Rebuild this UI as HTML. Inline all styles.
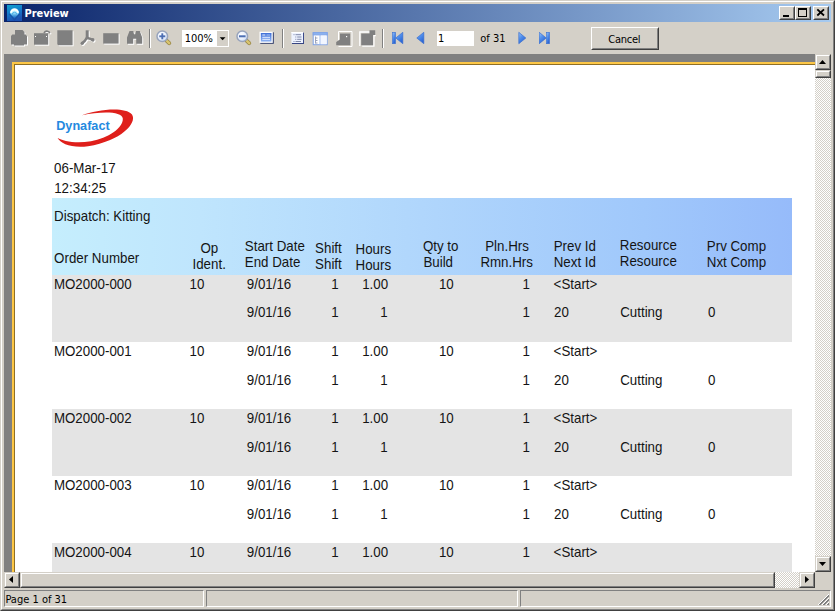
<!DOCTYPE html><html><head><meta charset="utf-8"><title>Preview</title><style>
html,body{margin:0;padding:0;}
body{width:835px;height:611px;overflow:hidden;background:#d4d0c8;position:relative;font-family:"Liberation Sans","DejaVu Sans",sans-serif;}
.abs{position:absolute;}
#frame{position:absolute;left:0;top:0;width:835px;height:611px;box-sizing:border-box;border:1px solid;border-color:#d4d0c8 #404040 #404040 #d4d0c8;}
#frame2{position:absolute;left:1px;top:1px;width:833px;height:609px;box-sizing:border-box;border:1px solid;border-color:#fff #808080 #808080 #fff;}
#title{position:absolute;left:4px;top:4px;width:827px;height:18px;background:linear-gradient(to right,#0a246a 0%,#a6caf0 100%);}
#title .txt{position:absolute;left:20.5px;top:3px;color:#fff;font-weight:bold;font-size:11px;line-height:14px;letter-spacing:-0.05px;}
.cb{position:absolute;top:2px;width:16px;height:14px;box-sizing:border-box;background:#d4d0c8;border:1px solid;border-color:#fff #404040 #404040 #fff;}
.cb i{position:absolute;left:0;top:0;right:0;bottom:0;border:1px solid;border-color:#d4d0c8 #808080 #808080 #d4d0c8;}
#grey{position:absolute;left:4px;top:54px;width:811px;height:518px;background:#808080;}
#pageb{position:absolute;left:12px;top:62px;width:803px;height:510px;background:#fdc746;}
#pageb2{position:absolute;left:14px;top:64px;width:801px;height:508px;background:#8f6f25;}
#page{position:absolute;left:15px;top:65px;width:800px;height:507px;background:#fff;overflow:hidden;}
.t{position:absolute;white-space:nowrap;font-size:13.33px;line-height:16px;color:#141414;transform:scaleY(1.08);transform-origin:0 12.6px;}
.r{text-align:right;}
.c{text-align:center;}
.sb{background-color:#fff;background-image:conic-gradient(#d4d0c8 25%,#fff 0 50%,#d4d0c8 0 75%,#fff 0);background-size:2px 2px;}
.btn{position:absolute;box-sizing:border-box;background:#d4d0c8;border:1px solid;border-color:#d4d0c8 #404040 #404040 #d4d0c8;}
.btn:before{content:"";position:absolute;left:0;top:0;right:0;bottom:0;border:1px solid;border-color:#fff #808080 #808080 #fff;}
.pb{border-color:#fff #404040 #404040 #fff;}
.pb:before{border-color:#d4d0c8 #808080 #808080 #d4d0c8;}
.sunk{position:absolute;box-sizing:border-box;border:1px solid;border-color:#808080 #fff #fff #808080;}
.tah{font-family:"DejaVu Sans Condensed","DejaVu Sans","Liberation Sans",sans-serif;}
</style></head><body>
<div id="frame"></div><div id="frame2"></div>
<div id="title">
<svg class="abs" style="left:3px;top:1px" width="16" height="16" viewBox="0 0 16 16"><defs><linearGradient id="ig" x1="0" y1="0" x2="0.300" y2="1"><stop offset="0" stop-color="#10a2cc"/><stop offset="0.450" stop-color="#1480cc"/><stop offset="1" stop-color="#1c52b2"/></linearGradient><linearGradient id="ib" x1="0" y1="0" x2="0" y2="1"><stop offset="0" stop-color="#d8f7ff"/><stop offset="0.450" stop-color="#a8eaff"/><stop offset="1" stop-color="#3aa8ea" stop-opacity="0.150"/></linearGradient></defs><rect width="15" height="16" fill="url(#ig)"/><path d="M2.200 8.800l5.300 6 5.300-6" fill="none" stroke="#12408f" stroke-width="1.200" opacity="0.450"/><path d="M3 7.600a4.500 4.300 0 0 1 9 0c0 1.600-2.300 3.400-4.500 5.700C5.300 11 3 9.200 3 7.600z" fill="url(#ib)"/><path d="M4.100 7.800a3.400 3.200 0 0 1 6.800 0" fill="none" stroke="#fff" stroke-width="1.700"/><path d="M5.300 9.400a2.200 2.100 0 0 1 4.400 0" fill="none" stroke="#2f9ade" stroke-width="0.900" opacity="0.800"/></svg>
<div class="txt tah">Preview</div>
<div class="cb" style="left:775px"><i></i><svg class="abs" style="left:0;top:0" width="14" height="12"><rect x="3" y="8" width="6" height="2" fill="#000"/></svg></div>
<div class="cb" style="left:791px"><i></i><svg class="abs" style="left:0;top:0" width="14" height="12"><rect x="2.500" y="1.500" width="8" height="8" fill="none" stroke="#000"/><rect x="2" y="1" width="9" height="2" fill="#000"/></svg></div>
<div class="cb" style="left:809px"><i></i><svg class="abs" style="left:0;top:0" width="14" height="12"><path d="M3.300 2.300l6.700 6.200M10 2.300l-6.700 6.200" stroke="#000" stroke-width="1.800" fill="none"/></svg></div>
</div>
<svg class="abs" style="left:11px;top:30px" width="18" height="18" viewBox="0 0 18 18"><g transform="translate(1,1)" fill="#fff" stroke="#fff"><path stroke="none" d="M4 0h7.500l2 2v2.500h1.200l1.300 1.500v8.600h-3v1h-10v-1h-3v-8.600l1.300-1.500h2.700z"/></g><g fill="#808080" stroke="#808080"><path stroke="none" d="M4 0h7.500l2 2v2.500h1.200l1.300 1.500v8.600h-3v1h-10v-1h-3v-8.600l1.300-1.500h2.700z"/></g></svg>
<svg class="abs" style="left:34px;top:30px" width="19" height="18" viewBox="0 0 19 18"><g transform="translate(1,1)" fill="#fff" stroke="#fff"><path stroke="none" d="M0 3.200h14.200v11.500h-14.200z"/><path fill="none" stroke-width="1.600" d="M10 3q1.300-2.200 3.500-1.800 1.800 .4 2.400 2"/></g><g fill="#808080" stroke="#808080"><path stroke="none" d="M0 3.200h14.200v11.500h-14.200z"/><path fill="none" stroke-width="1.600" d="M10 3q1.300-2.200 3.500-1.800 1.800 .4 2.400 2"/></g></svg>
<div class="abs" style="left:35px;top:36px;width:1px;height:1px;background:#fff"></div><div class="abs" style="left:46px;top:36px;width:1px;height:1px;background:#fff"></div>
<svg class="abs" style="left:57px;top:30px" width="18" height="18" viewBox="0 0 18 18"><g transform="translate(1,1)" fill="#fff" stroke="#fff"><path stroke="none" d="M0.300 0.300h15.300v14.900h-14.300l-1-1z"/></g><g fill="#808080" stroke="#808080"><path stroke="none" d="M0.300 0.300h15.300v14.900h-14.300l-1-1z"/></g></svg>
<svg class="abs" style="left:80px;top:30px" width="18" height="18" viewBox="0 0 18 18"><g transform="translate(1,1)" fill="#fff" stroke="#fff"><path fill="none" stroke-width="3" stroke-linecap="butt" d="M7.200 0.300v7.500"/><path fill="none" stroke-width="2.600" stroke-linecap="round" d="M7 7.500q-2 4-5 5.800M7.500 8q3 .6 5.500 2.200"/><circle cx="12.800" cy="9.800" r="1.700" stroke="none"/><circle cx="2.300" cy="13.200" r="1.600" stroke="none"/></g><g fill="#808080" stroke="#808080"><path fill="none" stroke-width="3" stroke-linecap="butt" d="M7.200 0.300v7.500"/><path fill="none" stroke-width="2.600" stroke-linecap="round" d="M7 7.500q-2 4-5 5.800M7.500 8q3 .6 5.500 2.200"/><circle cx="12.800" cy="9.800" r="1.700" stroke="none"/><circle cx="2.300" cy="13.200" r="1.600" stroke="none"/></g></svg>
<svg class="abs" style="left:103px;top:33px" width="18" height="13" viewBox="0 0 18 13"><g transform="translate(1,1)" fill="#fff" stroke="#fff"><path stroke="none" d="M0.200 0.200h15.400v10.400h-15.400z"/></g><g fill="#808080" stroke="#808080"><path stroke="none" d="M0.200 0.200h15.400v10.400h-15.400z"/></g></svg>
<svg class="abs" style="left:127px;top:31px" width="18" height="15" viewBox="0 0 18 15"><g transform="translate(1,1)" fill="#fff" stroke="#fff"><path stroke="none" d="M2.500 0h3.800l.7 3.300h1.300l.7-3.300h3.800l2.400 6.500v6.200h-6v-5h-3v5h-6.200v-6.200z"/></g><g fill="#808080" stroke="#808080"><path stroke="none" d="M2.500 0h3.800l.7 3.300h1.300l.7-3.300h3.800l2.400 6.500v6.200h-6v-5h-3v5h-6.200v-6.200z"/></g></svg>
<div class="abs" style="left:149px;top:29px;width:1px;height:19px;background:#808080"></div><div class="abs" style="left:150px;top:29px;width:1px;height:19px;background:#fff"></div>
<svg width="0" height="0" style="position:absolute"><defs><radialGradient id="lens" cx="0.4" cy="0.35" r="0.75"><stop offset="0" stop-color="#fff"/><stop offset="0.6" stop-color="#e6eefc"/><stop offset="1" stop-color="#b9cdf0"/></radialGradient><linearGradient id="nb" x1="0" y1="0" x2="0.600" y2="1"><stop offset="0" stop-color="#9cc6fa"/><stop offset="0.5" stop-color="#4f8deb"/><stop offset="1" stop-color="#2a63d2"/></linearGradient><linearGradient id="fp" x1="0" y1="0" x2="0" y2="1"><stop offset="0" stop-color="#3f6fd6"/><stop offset="1" stop-color="#8fb4f4"/></linearGradient></defs></svg>
<svg class="abs" style="left:156px;top:30px" width="17" height="17" viewBox="0 0 17 17"><path d="M10.800 10.800l2.400 2.400" stroke="#9a8848" stroke-width="4" stroke-linecap="round"/><path d="M11 11l2.200 2.200" stroke="#d9c570" stroke-width="2.400" stroke-linecap="round"/><circle cx="6.300" cy="6.300" r="5.300" fill="url(#lens)" stroke="#98a4bc" stroke-width="1.500"/><path d="M3.300 6.300h6" stroke="#4d6fb3" stroke-width="1.900"/><path d="M6.300 3.300v6" stroke="#4d6fb3" stroke-width="1.900"/></svg>
<div class="abs" style="left:182px;top:30px;width:47px;height:17px;background:#fff"></div>
<div class="abs" style="left:217px;top:31px;width:11px;height:15px;background:#d4d0c8"></div>
<svg class="abs" style="left:217px;top:31px" width="11" height="15"><path d="M2.700 6.300h5.800l-2.900 3z" fill="#000"/></svg>
<div class="abs tah" style="left:184.700px;top:32.200px;font-size:11px;line-height:13px;white-space:nowrap">100%</div>
<svg class="abs" style="left:236px;top:30px" width="17" height="17" viewBox="0 0 17 17"><path d="M10.800 10.800l2.400 2.400" stroke="#9a8848" stroke-width="4" stroke-linecap="round"/><path d="M11 11l2.200 2.200" stroke="#d9c570" stroke-width="2.400" stroke-linecap="round"/><circle cx="6.300" cy="6.300" r="5.300" fill="url(#lens)" stroke="#98a4bc" stroke-width="1.500"/><path d="M3 6.300h6.600" stroke="#4d6fb3" stroke-width="2"/></svg>
<svg class="abs" style="left:259px;top:31px" width="16" height="14" viewBox="0 0 16 14"><rect x="1.300" y="1.300" width="13.500" height="11.500" fill="#2c3a6a"/><rect x="0.500" y="0.700" width="13.300" height="11.200" fill="#fff"/><rect x="1.800" y="2" width="10.700" height="8.600" fill="url(#fp)"/><path d="M3.300 4h3M3.300 6.300h7.700M3.300 8.300h7.700" stroke="#e8f0ff" stroke-width="1"/><path d="M7.500 4h3.500" stroke="#a8c4f4" stroke-width="1"/></svg>
<div class="abs" style="left:282px;top:29px;width:1px;height:19px;background:#808080"></div><div class="abs" style="left:283px;top:29px;width:1px;height:19px;background:#fff"></div>
<svg class="abs" style="left:291px;top:31px" width="14" height="14" viewBox="0 0 14 14"><rect x="1" y="1.600" width="12" height="11.300" fill="#26367c"/><rect x="0.400" y="1" width="11.700" height="11" fill="#eef3ff"/><rect x="0.400" y="1" width="11.700" height="1" fill="#fff"/><path d="M4.500 3.700h5.500M6.200 6h4.300M6.200 8.300h4.300M4.500 10.500h5.500" stroke="#7d86a8" stroke-width="1"/><path d="M2.500 3.700h1M4.300 6h1M4.300 8.300h1M2.500 10.500h1" stroke="#7d86a8" stroke-width="1"/></svg>
<svg class="abs" style="left:312px;top:31px" width="17" height="15" viewBox="0 0 17 15"><rect x="1.200" y="1.700" width="14" height="12" fill="#fff" stroke="#7fa3e6" stroke-width="1"/><rect x="1.200" y="1.700" width="14" height="2.200" fill="#8fb4f2" stroke="#7fa3e6" stroke-width="1"/><path d="M8 4v10" stroke="#9dbaf0" stroke-width="1"/><rect x="9" y="4.700" width="5.700" height="8.500" fill="#f2f6ff"/><path d="M3.500 5.500v7M3.500 7h2M3.500 9.500h2M3.500 12h2" stroke="#9aa3bc" stroke-width="1" fill="none"/></svg>
<svg class="abs" style="left:336px;top:31px" width="18" height="17" viewBox="0 0 18 17"><g transform="translate(1,1)" fill="#fff" stroke="#fff"></g><g fill="#808080" stroke="#808080"></g></svg>
<svg class="abs" style="left:336px;top:30px" width="18" height="18" viewBox="0 0 18 18"><path d="M2.500 16.500h13.500v-15h-13.500v9" fill="none" stroke="#fff" stroke-width="1"/><path d="M4 3.500h10.200v11.700h-14v-3.200l3.800-2.500z" fill="#808080"/><rect x="10" y="6" width="1.200" height="1.200" fill="#fff"/></svg>
<svg class="abs" style="left:358px;top:29px" width="19" height="19" viewBox="0 0 19 19"><path d="M1.800 17v-14h10" fill="none" stroke="#fff" stroke-width="1.300"/><path d="M4.200 17.200h11.800v-10.500h1.800" fill="none" stroke="#fff" stroke-width="1.200"/><path d="M3.200 4.500h8.300v-3.200h5.700v4.800h-2.200v10.100h-11.800z" fill="#808080"/></svg>
<div class="abs" style="left:382px;top:29px;width:1px;height:19px;background:#808080"></div><div class="abs" style="left:383px;top:29px;width:1px;height:19px;background:#fff"></div>
<svg class="abs" style="left:392.3px;top:31.0px" width="14" height="14" viewBox="0 0 14 14"><rect x="0.500" y="1.300" width="3" height="11.400" fill="url(#nb)" stroke="#3a6fd0" stroke-width="0.600"/><path d="M3.800 7l7-5.700v11.400z" fill="url(#nb)" stroke="#3a6fd0" stroke-width="0.700"/></svg>
<svg class="abs" style="left:416.3px;top:31.0px" width="14" height="14" viewBox="0 0 14 14"><path d="M0.800 7l7-5.700v11.400z" fill="url(#nb)" stroke="#3a6fd0" stroke-width="0.700"/></svg>
<div class="abs" style="left:437px;top:31px;width:37px;height:15px;background:#fff"></div>
<div class="abs tah" style="left:438px;top:32.200px;font-size:11px;line-height:13px">1</div>
<div class="abs tah" style="left:480.300px;top:32.200px;font-size:11px;line-height:13px;white-space:nowrap">of 31</div>
<svg class="abs" style="left:517.5px;top:31.0px" width="14" height="14" viewBox="0 0 14 14"><path d="M7.800 7l-7-5.700v11.400z" fill="url(#nb)" stroke="#3a6fd0" stroke-width="0.700"/></svg>
<svg class="abs" style="left:538.7px;top:31.0px" width="14" height="14" viewBox="0 0 14 14"><rect x="7.500" y="1.300" width="3" height="11.400" fill="url(#nb)" stroke="#3a6fd0" stroke-width="0.600"/><path d="M7.200 7l-7-5.700v11.400z" fill="url(#nb)" stroke="#3a6fd0" stroke-width="0.700"/></svg>
<div class="btn pb" style="left:591px;top:27px;width:68px;height:23px"><div class="abs tah" style="left:-0.700px;top:4.600px;width:66px;text-align:center;font-size:11px;line-height:13px;letter-spacing:-0.250px">Cancel</div></div>
<div id="grey"></div><div id="pageb"></div><div id="pageb2"></div><div id="page">
<svg class="abs" style="left:35px;top:35px" width="100" height="60" viewBox="50 100 100 60"><path d="M82 115.200C97 109.500 125 106 132 114.500C137.500 123 121 141 88 146.300C72 148.300 60.500 144 57.500 137.800C63 141.500 76 143.600 91 141.300C108 138 123.500 128 122.800 118.500C122 110.800 100 111.500 82 115.200Z" fill="#df1f1b"/><text x="56.200" y="129.600" font-family="Liberation Sans, sans-serif" font-weight="bold" font-size="12.600" fill="#2489e0" textLength="53.500" lengthAdjust="spacingAndGlyphs">Dynafact</text></svg>

<div class="t" id="t0" style="left:39.10px;top:96.40px">06-Mar-17</div>
<div class="t" id="t1" style="left:39.20px;top:116.40px">12:34:25</div>
<div class="abs" style="left:37px;top:133px;width:740px;height:77px;background:linear-gradient(to right,#c5eefd 0%,#bfe5fd 20%,#b0d6fc 50%,#a0c8fb 80%,#96bbfa 100%)"></div>
<div class="t" id="t2" style="left:39.10px;top:144.40px">Dispatch: Kitting</div>
<div class="t" id="t3" style="left:39.10px;top:186.40px">Order Number</div>
<div class="t" id="t4" style="left:94.40px;width:200px;text-align:center;top:176.40px">Op</div>
<div class="t" id="t5" style="left:94.20px;width:200px;text-align:center;top:192.40px">Ident.</div>
<div class="t" id="t6" style="left:229.80px;top:174.40px">Start Date</div>
<div class="t" id="t7" style="left:229.80px;top:190.40px">End Date</div>
<div class="t" id="t8" style="left:300.10px;top:176.40px">Shift</div>
<div class="t" id="t9" style="left:300.10px;top:192.40px">Shift</div>
<div class="t" id="t10" style="left:340.50px;top:177.40px">Hours</div>
<div class="t" id="t11" style="left:340.50px;top:193.40px">Hours</div>
<div class="t" id="t12" style="left:407.90px;top:174.40px">Qty to</div>
<div class="t" id="t13" style="left:408.40px;top:190.40px">Build</div>
<div class="t" id="t14" style="left:392.10px;width:200px;text-align:center;top:174.40px">Pln.Hrs</div>
<div class="t" id="t15" style="left:391.70px;width:200px;text-align:center;top:190.40px">Rmn.Hrs</div>
<div class="t" id="t16" style="left:538.70px;top:174.40px">Prev Id</div>
<div class="t" id="t17" style="left:538.70px;top:190.40px">Next Id</div>
<div class="t" id="t18" style="left:604.80px;top:173.40px">Resource</div>
<div class="t" id="t19" style="left:604.80px;top:189.40px">Resource</div>
<div class="t" id="t20" style="left:691.80px;top:174.40px">Prv Comp</div>
<div class="t" id="t21" style="left:691.80px;top:190.40px">Nxt Comp</div>
<div class="abs" style="left:37px;top:210px;width:740px;height:67px;background:#e4e4e4"></div>
<div class="t" id="t22" style="left:38.90px;top:212.40px">MO2000-000</div>
<div class="t" id="t23" style="left:174.50px;top:212.40px">10</div>
<div class="t" id="t24" style="left:231.80px;top:212.40px">9/01/16</div>
<div class="t" id="t25" style="right:476.40px;top:212.40px">1</div>
<div class="t" id="t26" style="right:426.90px;top:212.40px">1.00</div>
<div class="t" id="t27" style="right:361.30px;top:212.40px">10</div>
<div class="t" id="t28" style="right:285.10px;top:212.40px">1</div>
<div class="t" id="t29" style="left:538.60px;top:212.40px">&lt;Start&gt;</div>
<div class="t" id="t30" style="left:231.80px;top:240.40px">9/01/16</div>
<div class="t" id="t31" style="right:476.40px;top:240.40px">1</div>
<div class="t" id="t32" style="right:427.40px;top:240.40px">1</div>
<div class="t" id="t33" style="right:285.10px;top:240.40px">1</div>
<div class="t" id="t34" style="left:539.00px;top:240.40px">20</div>
<div class="t" id="t35" style="left:605.20px;top:240.40px">Cutting</div>
<div class="t" id="t36" style="left:693.00px;top:240.40px">0</div>
<div class="t" id="t37" style="left:38.90px;top:279.40px">MO2000-001</div>
<div class="t" id="t38" style="left:174.50px;top:279.40px">10</div>
<div class="t" id="t39" style="left:231.80px;top:279.40px">9/01/16</div>
<div class="t" id="t40" style="right:476.40px;top:279.40px">1</div>
<div class="t" id="t41" style="right:426.90px;top:279.40px">1.00</div>
<div class="t" id="t42" style="right:361.30px;top:279.40px">10</div>
<div class="t" id="t43" style="right:285.10px;top:279.40px">1</div>
<div class="t" id="t44" style="left:538.60px;top:279.40px">&lt;Start&gt;</div>
<div class="t" id="t45" style="left:231.80px;top:308.40px">9/01/16</div>
<div class="t" id="t46" style="right:476.40px;top:308.40px">1</div>
<div class="t" id="t47" style="right:427.40px;top:308.40px">1</div>
<div class="t" id="t48" style="right:285.10px;top:308.40px">1</div>
<div class="t" id="t49" style="left:539.00px;top:308.40px">20</div>
<div class="t" id="t50" style="left:605.20px;top:308.40px">Cutting</div>
<div class="t" id="t51" style="left:693.00px;top:308.40px">0</div>
<div class="abs" style="left:37px;top:344px;width:740px;height:67px;background:#e4e4e4"></div>
<div class="t" id="t52" style="left:38.90px;top:346.40px">MO2000-002</div>
<div class="t" id="t53" style="left:174.50px;top:346.40px">10</div>
<div class="t" id="t54" style="left:231.80px;top:346.40px">9/01/16</div>
<div class="t" id="t55" style="right:476.40px;top:346.40px">1</div>
<div class="t" id="t56" style="right:426.90px;top:346.40px">1.00</div>
<div class="t" id="t57" style="right:361.30px;top:346.40px">10</div>
<div class="t" id="t58" style="right:285.10px;top:346.40px">1</div>
<div class="t" id="t59" style="left:538.60px;top:346.40px">&lt;Start&gt;</div>
<div class="t" id="t60" style="left:231.80px;top:375.40px">9/01/16</div>
<div class="t" id="t61" style="right:476.40px;top:375.40px">1</div>
<div class="t" id="t62" style="right:427.40px;top:375.40px">1</div>
<div class="t" id="t63" style="right:285.10px;top:375.40px">1</div>
<div class="t" id="t64" style="left:539.00px;top:375.40px">20</div>
<div class="t" id="t65" style="left:605.20px;top:375.40px">Cutting</div>
<div class="t" id="t66" style="left:693.00px;top:375.40px">0</div>
<div class="t" id="t67" style="left:38.90px;top:413.40px">MO2000-003</div>
<div class="t" id="t68" style="left:174.50px;top:413.40px">10</div>
<div class="t" id="t69" style="left:231.80px;top:413.40px">9/01/16</div>
<div class="t" id="t70" style="right:476.40px;top:413.40px">1</div>
<div class="t" id="t71" style="right:426.90px;top:413.40px">1.00</div>
<div class="t" id="t72" style="right:361.30px;top:413.40px">10</div>
<div class="t" id="t73" style="right:285.10px;top:413.40px">1</div>
<div class="t" id="t74" style="left:538.60px;top:413.40px">&lt;Start&gt;</div>
<div class="t" id="t75" style="left:231.80px;top:442.40px">9/01/16</div>
<div class="t" id="t76" style="right:476.40px;top:442.40px">1</div>
<div class="t" id="t77" style="right:427.40px;top:442.40px">1</div>
<div class="t" id="t78" style="right:285.10px;top:442.40px">1</div>
<div class="t" id="t79" style="left:539.00px;top:442.40px">20</div>
<div class="t" id="t80" style="left:605.20px;top:442.40px">Cutting</div>
<div class="t" id="t81" style="left:693.00px;top:442.40px">0</div>
<div class="abs" style="left:37px;top:478px;width:740px;height:67px;background:#e4e4e4"></div>
<div class="t" id="t82" style="left:38.90px;top:480.40px">MO2000-004</div>
<div class="t" id="t83" style="left:174.50px;top:480.40px">10</div>
<div class="t" id="t84" style="left:231.80px;top:480.40px">9/01/16</div>
<div class="t" id="t85" style="right:476.40px;top:480.40px">1</div>
<div class="t" id="t86" style="right:426.90px;top:480.40px">1.00</div>
<div class="t" id="t87" style="right:361.30px;top:480.40px">10</div>
<div class="t" id="t88" style="right:285.10px;top:480.40px">1</div>
<div class="t" id="t89" style="left:538.60px;top:480.40px">&lt;Start&gt;</div>
<div class="t" id="t90" style="left:231.80px;top:509.40px">9/01/16</div>
<div class="t" id="t91" style="right:476.40px;top:509.40px">1</div>
<div class="t" id="t92" style="right:427.40px;top:509.40px">1</div>
<div class="t" id="t93" style="right:285.10px;top:509.40px">1</div>
<div class="t" id="t94" style="left:539.00px;top:509.40px">20</div>
<div class="t" id="t95" style="left:605.20px;top:509.40px">Cutting</div>
<div class="t" id="t96" style="left:693.00px;top:509.40px">0</div>
</div>
<div class="abs sb" style="left:815px;top:54px;width:16px;height:518px"></div>
<div class="btn" style="left:815px;top:54px;width:16px;height:16px"><svg class="abs" style="left:-1px;top:-1px" width="16" height="16"><path d="M4 10h7l-3.500-4z" fill="#000"/></svg></div>
<div class="btn" style="left:815px;top:70px;width:16px;height:8px"></div>
<div class="btn" style="left:815px;top:556px;width:16px;height:16px"><svg class="abs" style="left:-1px;top:-1px" width="16" height="16"><path d="M4 6h7l-3.500 4z" fill="#000"/></svg></div>
<div class="abs sb" style="left:4px;top:572px;width:811px;height:16px"></div>
<div class="btn" style="left:4px;top:572px;width:16px;height:16px"><svg class="abs" style="left:-1px;top:-1px" width="16" height="16"><path d="M9 4v7l-4-3.500z" fill="#000"/></svg></div>
<div class="btn" style="left:20px;top:572px;width:755px;height:16px"></div>
<div class="btn" style="left:799px;top:572px;width:16px;height:16px"><svg class="abs" style="left:-1px;top:-1px" width="16" height="16"><path d="M6 4v7l4-3.500z" fill="#000"/></svg></div>
<div class="abs" style="left:815px;top:572px;width:16px;height:16px;background:#d4d0c8"></div>
<div class="sunk" style="left:4px;top:590px;width:200px;height:17px"><div class="abs tah" style="left:0.4px;top:2px;font-size:11px;line-height:13px;white-space:nowrap">Page 1 of 31</div></div>
<div class="sunk" style="left:206px;top:590px;width:312px;height:17px"></div>
<div class="sunk" style="left:520px;top:590px;width:311px;height:17px"></div>
<svg class="abs" style="left:817px;top:593px" width="13" height="13"><path d="M12 1L1 12M12 5L5 12M12 9L9 12" stroke="#fff" stroke-width="1"/><path d="M12 2L2 12M12 3L3 12M12 6L6 12M12 7L7 12M12 10L10 12M12 11L11 12" stroke="#808080" stroke-width="1"/></svg>
</body></html>
